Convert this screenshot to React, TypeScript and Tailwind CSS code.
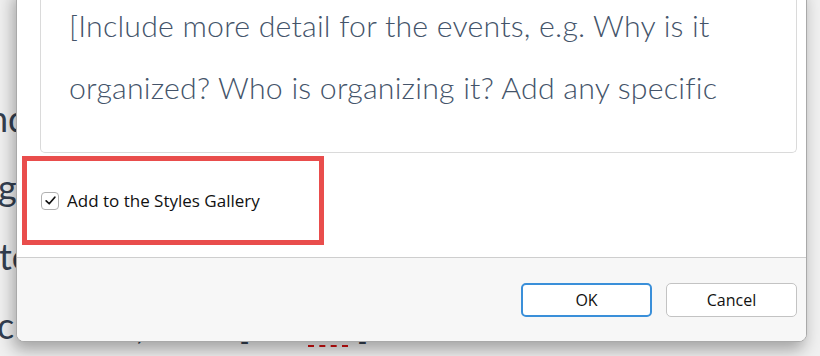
import React from "react";

export default function App() {
  return (
    <div className="relative w-[820px] h-[356px] overflow-hidden bg-[#f0f0f0]" style={{ fontFamily: "Lato, 'Noto Sans', sans-serif" }}>
      {/* background document */}
      <div className="flex flex-col pt-[84px] text-[36px] leading-[69px] text-[#333f50] whitespace-nowrap">
        <div className="ml-[-12px]">nd more text</div>
        <div className="ml-[-2px]">g more text</div>
        <div className="ml-[-1px]">te more text</div>
        <div className="flex items-start ml-[-3px]">
          <span className="w-[139px]">c</span>
          <span className="w-[102px]">,</span>
          <span className="w-[70px]">[</span>
          <span className="w-[50px] h-[56px] flex flex-col justify-end">
            <span className="w-[40px] h-[2px] border-b-2 border-dashed border-[#d01010]"></span>
          </span>
          <span>]</span>
        </div>
      </div>

      {/* dialog */}
      <div className="absolute left-[16px] top-[-12px] w-[791px] h-[354px] flex flex-col bg-white border border-[#a9a9a9] rounded-b-[8px] shadow-[-3px_8px_16px_rgba(0,0,0,0.32)] overflow-hidden">
        <div className="flex-1 flex flex-col">
          <div className="ml-[23px] w-[757px] h-[164px] border border-t-0 border-[#dadada] rounded-b-[5px] pl-[28px] pt-[5px] text-[30.3px] font-light leading-[62px] text-[#44546a] tracking-[0.2px]" style={{ fontFamily: "'Lato Light', Lato, sans-serif" }}>
            <div>[Include more detail for the events, e.g. Why is it</div>
            <div>organized? Who is organizing it? Add any specific</div>
          </div>
          <div className="ml-[5px] mt-[3px] w-[302px] h-[89px] border-[5px] border-[#e94d4c] flex items-center pl-[14px] gap-[8px]">
            <div className="w-[18px] h-[18px] rounded-[4px] border-[1.5px] border-[#b0b0b0] bg-white flex items-center justify-center">
              <svg width="13" height="13" viewBox="0 0 12 12" fill="none">
                <path d="M2 6.3 L4.8 9 L10 3" stroke="#111" strokeWidth="1.6" strokeLinecap="round" strokeLinejoin="round" />
              </svg>
            </div>
            <span className="text-[17px] text-[#111]" style={{ fontFamily: "'Open Sans', 'Noto Sans', sans-serif" }}>Add to the Styles Gallery</span>
          </div>
        </div>
        <div className="h-[84px] shrink-0 bg-[#f7f7f7] border-t border-[#cecece] flex justify-end items-start pt-[25px] pr-[9px] gap-[14px]" style={{ fontFamily: "'Open Sans', 'Noto Sans', sans-serif" }}>
          <button className="w-[131px] h-[34px] bg-white border-2 border-[#3a8fd9] rounded-[5px] text-[16px] text-[#111]">OK</button>
          <button className="w-[131px] h-[34px] bg-white border border-[#c3c3c3] rounded-[5px] text-[16px] text-[#111]">Cancel</button>
        </div>
      </div>
    </div>
  );
}
